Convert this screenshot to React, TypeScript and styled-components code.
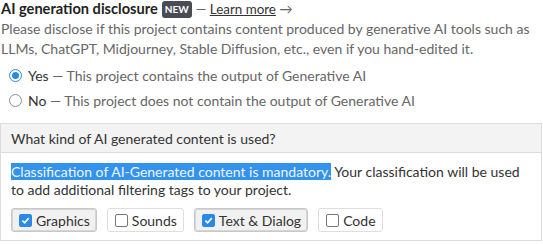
import React from "react";
import styled, { createGlobalStyle } from "styled-components";

const GlobalStyle = createGlobalStyle`
  html, body {
    margin: 0;
    padding: 0;
    background: #fff;
  }
  body {
    font-family: Lato, "Open Sans", sans-serif;
    font-size: 14px;
    color: #222;
  }
`;

const Wrapper = styled.div`
  width: 542px;
`;

const Title = styled.div`
  display: flex;
  align-items: center;
  gap: 4px;
  font-size: 14.6px;
  line-height: 18px;
  padding-left: 1px;
`;

const TitleText = styled.span`
  font-weight: 700;
  color: #222;
`;

const Badge = styled.span`
  background: #4a4c55;
  color: #fff;
  font-size: 10px;
  font-weight: 700;
  border-radius: 3px;
  padding: 2px 3px;
  line-height: 13px;
`;

const Sub = styled.span`
  color: #666;
  font-size: 13.4px;
  a {
    color: #333;
    text-decoration: underline;
  }
`;

const Description = styled.p`
  margin: 1px 0 0;
  padding-left: 1px;
  color: #666;
  font-size: 14px;
  line-height: 20px;
`;

const RadioGroup = styled.div`
  display: flex;
  flex-direction: column;
  gap: 6px;
  margin-top: 7px;
  padding-left: 9px;
`;

const RadioRow = styled.label`
  display: flex;
  align-items: center;
  gap: 6px;
  line-height: 19px;
  color: #666;
`;

const RadioDot = styled.span<{ checked: boolean }>`
  width: 11px;
  height: 11px;
  border-radius: 50%;
  border: 1px solid ${p => (p.checked ? "#2a8ae6" : "#8c8c8c")};
  display: inline-flex;
  align-items: center;
  justify-content: center;
  background: #fff;
  &::after {
    content: "";
    width: 7px;
    height: 7px;
    border-radius: 50%;
    background: ${p => (p.checked ? "#2a8ae6" : "transparent")};
  }
`;

const Strong = styled.span`
  color: #333;
`;

const Panel = styled.div`
  margin-top: 13px;
  border: 1px solid #dcdcdc;
`;

const PanelHeader = styled.div`
  background: #f3f3f3;
  border-bottom: 1px solid #dcdcdc;
  padding: 6px 10px 4px;
  line-height: 18px;
  color: #333;
`;

const PanelBody = styled.div`
  padding: 10px 10px 8px;
`;

const BodyText = styled.p`
  margin: 0;
  line-height: 18px;
  color: #333;
`;

const Highlight = styled.span`
  background: #3392ec;
  color: #eef6ff;
`;

const Options = styled.div`
  display: flex;
  gap: 10px;
  margin-top: 9px;
`;

const Option = styled.label<{ checked: boolean }>`
  display: flex;
  align-items: center;
  gap: 4px;
  height: 24px;
  box-sizing: border-box;
  padding: 0 6px 0 7px;
  border-radius: 3px;
  color: #333;
  font-size: 14px;
  border: 1px solid ${p => (p.checked ? "#c8c8c8" : "#dedede")};
  background: ${p => (p.checked ? "#f1f1f1" : "#fff")};
  box-shadow: ${p => (p.checked ? "inset 0 0 0 1px #d6d6d6" : "none")};
`;

const Box = styled.span<{ checked: boolean }>`
  width: 13px;
  height: 13px;
  border-radius: 2px;
  box-sizing: border-box;
  border: 1px solid ${p => (p.checked ? "#2a8ae6" : "#777")};
  background: ${p => (p.checked ? "#2a8ae6" : "#fff")};
  display: inline-flex;
  align-items: center;
  justify-content: center;
`;

const Check = () => (
  <svg width="9" height="9" viewBox="0 0 10 10">
    <path d="M1.5 5.2 L4 7.6 L8.6 2.4" fill="none" stroke="#fff" strokeWidth="1.8" />
  </svg>
);

const options = [
  { label: "Graphics", checked: true },
  { label: "Sounds", checked: false },
  { label: "Text & Dialog", checked: true },
  { label: "Code", checked: false },
];

const App = () => (
  <Wrapper>
    <GlobalStyle />
    <Title>
      <TitleText>AI generation disclosure</TitleText>
      <Badge>NEW</Badge>
      <Sub>
        — <a>Learn more</a> →
      </Sub>
    </Title>
    <Description>
      Please disclose if this project contains content produced by generative AI tools such as
      LLMs, ChatGPT, Midjourney, Stable Diffusion, etc., even if you hand-edited it.
    </Description>
    <RadioGroup>
      <RadioRow>
        <RadioDot checked />
        <span>
          <Strong>Yes</Strong> — This project contains the output of Generative AI
        </span>
      </RadioRow>
      <RadioRow>
        <RadioDot checked={false} />
        <span>
          <Strong>No</Strong> — This project does not contain the output of Generative AI
        </span>
      </RadioRow>
    </RadioGroup>
    <Panel>
      <PanelHeader>What kind of AI generated content is used?</PanelHeader>
      <PanelBody>
        <BodyText>
          <Highlight>Classification of AI-Generated content is mandatory.</Highlight> Your
          classification will be used to add additional filtering tags to your project.
        </BodyText>
        <Options>
          {options.map(o => (
            <Option key={o.label} checked={o.checked}>
              <Box checked={o.checked}>{o.checked && <Check />}</Box>
              {o.label}
            </Option>
          ))}
        </Options>
      </PanelBody>
    </Panel>
  </Wrapper>
);

export default App;
